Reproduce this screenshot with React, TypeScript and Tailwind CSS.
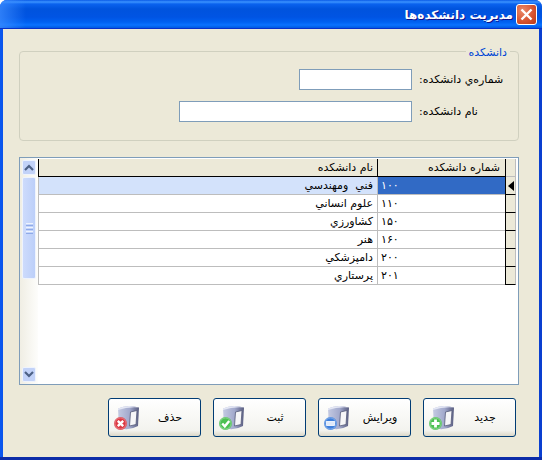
import React from "react";

const rows = [
  ["۱۰۰", "فني  ومهندسي"],
  ["۱۱۰", "علوم انساني"],
  ["۱۵۰", "کشاورزي"],
  ["۱۶۰", "هنر"],
  ["۲۰۰", "دامپزشکي"],
  ["۲۰۱", "پرستاري"],
];

function Badge({ kind }: { kind: string }) {
  const fill = kind === "del" ? "#dc3a44" : kind === "edit" ? "#3f80dc" : "#4cc052";
  return (
    <g>
      <circle cx="6.5" cy="18.5" r="6.5" fill={fill} />
      <circle cx="6.5" cy="18.5" r="5.6" fill="none" stroke="#fff" strokeOpacity="0.35" strokeWidth="1" />
      {kind === "del" && <path d="M3.8 15.8l5.4 5.4M9.2 15.8l-5.4 5.4" stroke="#fff" strokeWidth="2.4" />}
      {kind === "ok" && <path d="M3.2 18.5l2.6 2.8 4.4-5.4" fill="none" stroke="#fff" strokeWidth="2.4" />}
      {kind === "add" && <path d="M6.5 14.5v8M2.5 18.5h8" stroke="#fff" strokeWidth="2.8" />}
      {kind === "edit" && <rect x="2.6" y="16.5" width="7.8" height="4" fill="#dfe9fb" stroke="#fff" strokeWidth="0.8" />}
    </g>
  );
}

function Icon({ kind }: { kind: string }) {
  return (
    <svg width="26" height="26" viewBox="0 0 26 26" className="shrink-0">
      <defs>
        <linearGradient id={"body" + kind} x1="0" x2="1" y1="0" y2="0">
          <stop offset="0" stopColor="#c4cae2" />
          <stop offset="0.55" stopColor="#a2a9cc" />
          <stop offset="0.82" stopColor="#757a9e" />
          <stop offset="1" stopColor="#5a5e80" />
        </linearGradient>
      </defs>
      <path d="M4 3.5Q13 -1 25 2.5L24 21Q15 26 5 23Z" fill={"url(#body" + kind + ")"} />
      <path d="M4 3.5Q13 -1 25 2.5Q14 1.5 4 5Z" fill="#e4e7f4" />
      <path d="M16.5 7L23 5.5L22 19.5L15.5 21Z" fill="#f6f6f8" stroke="#555a78" strokeWidth="0.8" />
      <Badge kind={kind} />
    </svg>
  );
}

function ActionButton({ label, kind }: { label: string; kind: string }) {
  return (
    <button className="flex items-center w-[93px] h-[39px] pl-[5px] rounded-[3px] border border-[#003c74] bg-[linear-gradient(to_bottom,#ffffff,#f3f3ee_85%,#dcd8c8)]">
      <Icon kind={kind} />
      <span className="flex-1 text-center text-[11px] text-black pt-[2px]">{label}</span>
    </button>
  );
}

function Field({ label, width }: { label: string; width: string }) {
  return (
    <div dir="rtl" className="flex items-center gap-[7px]">
      <span className="w-[87px] pt-[2px] text-left text-[11px] text-black whitespace-nowrap">{label}</span>
      <input className={"h-[21px] bg-white border border-[#7f9db9] " + width} />
    </div>
  );
}

function Chevron({ up }: { up?: boolean }) {
  return (
    <svg width="10" height="7" viewBox="0 0 10 7">
      <path d={up ? "M1 6L5 2L9 6" : "M1 1L5 5L9 1"} fill="none" stroke="#4d6185" strokeWidth="2.2" />
    </svg>
  );
}

const scrollBtn =
  "flex items-center justify-center w-[14px] h-[15px] rounded-[2px] border border-[#eef3fd] bg-[#c2d2f8]";

export default function App() {
  return (
    <div className="w-[542px] h-[460px] flex flex-col rounded-t-[7px] overflow-hidden border-b-[3px] border-b-[#0c2ca8] bg-[linear-gradient(to_right,#0a58f0,#0a4fe6_1%,#0a3fd0)] font-['DejaVu_Sans',sans-serif]">
      <div className="h-[29px] shrink-0 flex items-center justify-end pr-[5px] gap-[3px] border-b border-[#0831c8] bg-[linear-gradient(to_right,rgba(60,140,255,0.75),rgba(60,140,255,0)_26px),linear-gradient(to_bottom,#0a5ae6,#3b93ff_2px,#0a62ee_4px,#0053dd_9px,#0054e3_17px,#0060f0_22px,#0a72ff_25px,#0058e0_28px)]">
        <span dir="rtl" className="pt-[2px] text-[12px] font-bold text-white [text-shadow:1px_1px_0_#0f1089]">
          مديريت دانشکده‌ها
        </span>
        <div className="w-[21px] h-[21px] flex items-center justify-center rounded-[3px] border border-white bg-[radial-gradient(circle_at_30%_30%,#ea8a6a,#d6512e_60%,#b83a16)]">
          <svg width="13" height="13" viewBox="0 0 13 13">
            <path d="M1.5 1.5L11.5 11.5M11.5 1.5L1.5 11.5" stroke="#fff" strokeWidth="2.4" />
          </svg>
        </div>
      </div>

      <div className="flex-1 ml-[3px] mr-[3px] bg-[#ece9d8] px-[16px] pt-[22px] flex flex-col">
        <div className="relative w-[500px] h-[90px] shrink-0 rounded-[4px] border border-[#d0d0bf] pt-[17px] pr-[12px] flex flex-col items-end gap-[11px]">
          <span dir="rtl" className="absolute -top-[5px] right-[8px] px-[3px] bg-[#ece9d8] text-[11px] leading-[12px] text-[#0046d5]">
            دانشکده
          </span>
          <Field label="شماره‌ي دانشکده:" width="w-[113px]" />
          <Field label="نام دانشکده:" width="w-[233px]" />
        </div>

        <div className="mt-[16px] w-[500px] h-[228px] shrink-0 border border-[#7f9db9] bg-white flex">
          <div className="w-[18px] shrink-0 flex flex-col items-center py-[2px] bg-[linear-gradient(to_right,#f0eee4,#fdfdfb)]">
            <div className={scrollBtn}>
              <Chevron up />
            </div>
            <div className="mt-[2px] w-[14px] h-[102px] rounded-[2px] border border-[#eef3fd] bg-[linear-gradient(to_right,#cddbfc,#bccff9)] flex flex-col items-center justify-center gap-[1px]">
              <div className="w-[7px] h-[1px] bg-[#eef3fd]" />
              <div className="w-[7px] h-[1px] bg-[#8faae8]" />
              <div className="w-[7px] h-[1px] bg-[#eef3fd]" />
              <div className="w-[7px] h-[1px] bg-[#8faae8]" />
              <div className="w-[7px] h-[1px] bg-[#eef3fd]" />
              <div className="w-[7px] h-[1px] bg-[#8faae8]" />
            </div>
            <div className="flex-1" />
            <div className={scrollBtn}>
              <Chevron />
            </div>
          </div>

          <div className="flex-1 min-w-0 pt-[1px] flex flex-col text-[11px] text-black">
            <div className="flex h-[18px]">
              <div dir="rtl" className="w-[340px] border-l border-l-black border-b border-b-black border-r border-r-black bg-[#ece9d8] flex items-center px-[4px] pt-[2px]">
                نام دانشکده
              </div>
              <div dir="rtl" className="w-[128px] border-b border-b-black border-r border-r-black bg-[#ece9d8] flex items-center px-[5px] pt-[2px] whitespace-nowrap">
                شماره دانشکده
              </div>
              <div className="w-[10px] bg-[#ece9d8] border-b border-b-[#bdbdbd] border-r border-r-[#bdbdbd]" />
            </div>
            {rows.map(([num, name], i) => (
              <div key={num} className="flex h-[18px]">
                <div
                  dir="rtl"
                  className={
                    "w-[340px] border-l border-l-[#bdbdbd] border-b border-b-[#bdbdbd] border-r border-r-[#bdbdbd] flex items-center px-[4px] pt-[2px] whitespace-pre " +
                    (i === 0 ? "bg-[#d3e2fb]" : "bg-white")
                  }
                >
                  {name}
                </div>
                <div
                  dir="rtl"
                  className={
                    "w-[127px] flex items-center justify-end px-[3px] pt-[2px] border-b border-b-[#bdbdbd] " +
                    (i === 0 ? "bg-[#316ac5] text-white" : "bg-white")
                  }
                >
                  <span dir="ltr" className="tracking-[1px]">{num}</span>
                </div>
                <div className="w-[11px] bg-[#ece9d8] border-l border-l-black border-b border-b-black border-r border-r-[#bdbdbd] flex items-center justify-center">
                  {i === 0 && (
                    <svg width="6" height="10" viewBox="0 0 6 10">
                      <path d="M6 0V10L0 5Z" fill="#000" />
                    </svg>
                  )}
                </div>
              </div>
            ))}
          </div>
        </div>

        <div className="mt-[13px] flex gap-[12px] pl-[89px]">
          <ActionButton label="حذف" kind="del" />
          <ActionButton label="ثبت" kind="ok" />
          <ActionButton label="ويرايش" kind="edit" />
          <ActionButton label="جديد" kind="add" />
        </div>
      </div>
    </div>
  );
}
